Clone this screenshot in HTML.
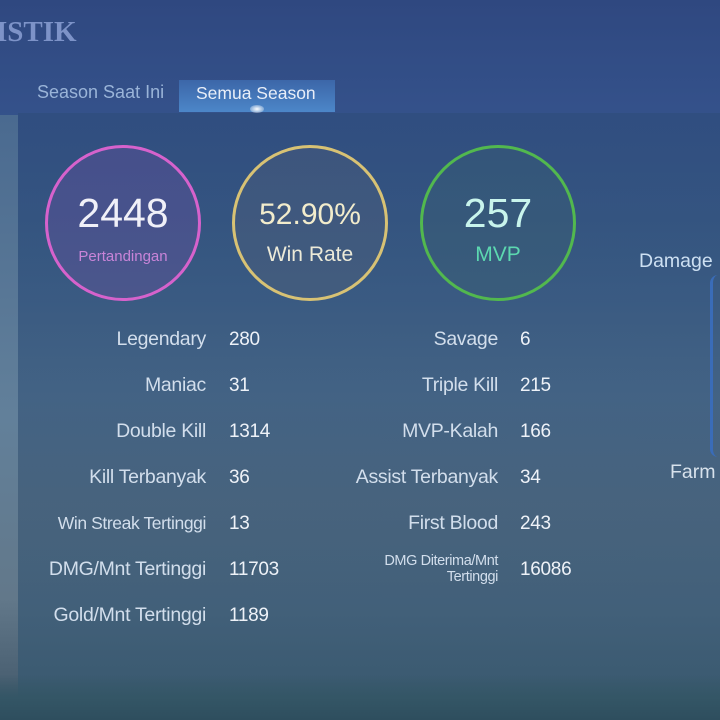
<!DOCTYPE html>
<html><head><meta charset="utf-8"><style>
html,body{margin:0;padding:0}
body{width:720px;height:720px;overflow:hidden;position:relative;font-family:"Liberation Sans",sans-serif;
background:linear-gradient(180deg,#2f4880 0%,#34518a 15%,#3b5d88 35%,#4a6a8a 55%,#4d6880 70%,#44627a 85%,#36566a 100%);}
.strip{position:absolute;left:0;top:115px;width:18px;height:605px;background:linear-gradient(180deg,#4a6a90,#62809a 50%,#62788a 80%,#3e5466);}
.panel{position:absolute;left:18px;top:113px;width:702px;height:580px;background:linear-gradient(180deg,rgba(40,70,110,.35),rgba(60,90,120,.12));}
.bottom{position:absolute;left:0;top:675px;width:720px;height:45px;background:linear-gradient(180deg,rgba(61,96,112,0),#345666 50%,#2e4e5e);}
.t{position:absolute;white-space:nowrap;color:#d6e2ef}
.title{left:-4px;top:16px;font-family:"Liberation Serif",serif;font-weight:bold;font-size:29px;color:#7d93c8}
.tab1{left:37px;top:82px;font-size:18px;color:#9ab4d8}
.tab2{position:absolute;left:179px;top:80px;width:156px;height:32px;background:linear-gradient(180deg,#3c66a8,#4c86c8);}
.tab2 span{position:absolute;left:17px;top:3px;font-size:17.5px;color:#e8eef8}
.glow{position:absolute;left:250px;top:105px;width:14px;height:8px;border-radius:50%;background:radial-gradient(#fff,rgba(200,230,255,0));}
.c{position:absolute;width:156px;height:156px;border-radius:50%;box-sizing:border-box;border:3px solid;text-align:center}
.c .n{position:absolute;left:0;right:0;top:42px;font-size:41px;color:#f0f0f8}
.c .l{position:absolute;left:0;right:0;top:95px;font-size:21px}
.lab{position:absolute;text-align:right;font-size:19.5px;color:#d2deec;white-space:nowrap;letter-spacing:-0.3px}
.val{position:absolute;font-size:19px;color:#eef2f8;white-space:nowrap;letter-spacing:-0.3px;margin-top:1px}
</style></head><body>
<div class="strip"></div>
<div class="panel"></div>
<div class="bottom"></div>
<div class="t title">ISTIK</div>
<div class="t tab1">Season Saat Ini</div>
<div class="tab2"><span>Semua Season</span></div>
<div class="glow"></div>

<div class="c" style="left:45px;top:145px;border-color:#d662cc;background:rgba(110,80,160,.35)"><div class="n">2448</div><div class="l" style="font-size:15px;top:100px;color:#c884d8">Pertandingan</div></div>
<div class="c" style="left:232px;top:145px;border-color:#d8c274;background:rgba(90,100,120,.3)"><div class="n" style="font-size:30px;top:50px;color:#f2eccc">52.90%</div><div class="l" style="color:#ecead8">Win Rate</div></div>
<div class="c" style="left:420px;top:145px;border-color:#52b84e;background:rgba(60,100,110,.3)"><div class="n" style="color:#c8f4ec">257</div><div class="l" style="color:#5cd8b0">MVP</div></div>

<div class="t" style="left:639px;top:250px;font-size:19.5px;color:#cde0f2">Damage</div>
<div style="position:absolute;left:710px;top:275px;width:10px;height:182px;border-left:3px solid #3a6cb8;border-radius:8px 0 0 8px"></div>
<div class="t" style="left:670px;top:461px;font-size:19.5px;color:#d8e2ec">Farm</div>

<div class="lab" style="right:514px;top:328px">Legendary</div><div class="val" style="left:229px;top:328px">280</div>
<div class="lab" style="right:514px;top:374px">Maniac</div><div class="val" style="left:229px;top:374px">31</div>
<div class="lab" style="right:514px;top:420px">Double Kill</div><div class="val" style="left:229px;top:420px">1314</div>
<div class="lab" style="right:514px;top:466px">Kill Terbanyak</div><div class="val" style="left:229px;top:466px">36</div>
<div class="lab" style="right:514px;top:513px;font-size:17.5px;letter-spacing:-0.4px">Win Streak Tertinggi</div><div class="val" style="left:229px;top:512px">13</div>
<div class="lab" style="right:514px;top:558px">DMG/Mnt Tertinggi</div><div class="val" style="left:229px;top:558px">11703</div>
<div class="lab" style="right:514px;top:604px">Gold/Mnt Tertinggi</div><div class="val" style="left:229px;top:604px">1189</div>

<div class="lab" style="right:222px;top:328px">Savage</div><div class="val" style="left:520px;top:328px">6</div>
<div class="lab" style="right:222px;top:374px">Triple Kill</div><div class="val" style="left:520px;top:374px">215</div>
<div class="lab" style="right:222px;top:420px">MVP-Kalah</div><div class="val" style="left:520px;top:420px">166</div>
<div class="lab" style="right:222px;top:466px">Assist Terbanyak</div><div class="val" style="left:520px;top:466px">34</div>
<div class="lab" style="right:222px;top:512px">First Blood</div><div class="val" style="left:520px;top:512px">243</div>
<div class="lab" style="right:222px;top:553px;font-size:14.5px;line-height:16px;letter-spacing:-0.4px">DMG Diterima/Mnt<br>Tertinggi</div><div class="val" style="left:520px;top:558px">16086</div>
</body></html>
